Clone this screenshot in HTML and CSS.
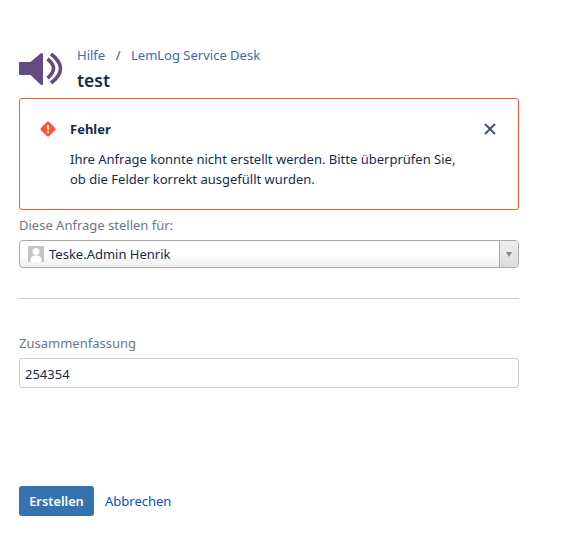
FILE: index.html
```html
<!DOCTYPE html>
<html lang="de">
<head>
<meta charset="utf-8">
<title>test</title>
<link rel="stylesheet" href="styles.css">
</head>
<body>
<main class="page">
  <header class="head">
    <svg class="logo" width="44" height="36" viewBox="0 0 44 36" aria-hidden="true">
      <path fill="#654982" d="M0 12Q0 11 1 11H11.500L21.500 2.500Q24 1 24 3.500V32.500Q24 35 21.500 33.500L11.500 24H1Q0 24 0 23Z"/>
      <path fill="none" stroke="#654982" stroke-width="3.600" d="M28.500 8Q40.500 17.500 28.500 27"/>
      <path fill="none" stroke="#654982" stroke-width="3.600" d="M32 3Q51 17.500 32 32"/>
    </svg>
    <div class="head-text">
      <nav class="crumbs"><a href="#">Hilfe</a><span class="sep">/</span><a href="#">LemLog Service Desk</a></nav>
      <h1 class="title">test</h1>
    </div>
  </header>

  <section class="alert">
    <svg class="alert-icon" width="16" height="16" viewBox="0 0 16 16" aria-hidden="true">
      <path fill="#ff5630" d="M6.800 1.100a1.700 1.700 0 0 1 2.400 0l5.700 5.700a1.700 1.700 0 0 1 0 2.400l-5.700 5.700a1.700 1.700 0 0 1-2.400 0L1.100 9.200a1.700 1.700 0 0 1 0-2.400z"/>
      <rect x="7" y="4" width="2" height="5" rx="1" fill="#fff"/>
      <circle cx="8" cy="11" r="1.100" fill="#fff"/>
    </svg>
    <div class="alert-body">
      <h2 class="alert-title">Fehler</h2>
      <p class="alert-text">Ihre Anfrage konnte nicht erstellt werden. Bitte überprüfen Sie,<br>ob die Felder korrekt ausgefüllt wurden.</p>
    </div>
    <svg class="alert-close" width="12" height="12" viewBox="0 0 12 12" aria-hidden="true">
      <path fill="none" stroke="#42526e" stroke-width="2" d="M1 1l10 10M11 1L1 11"/>
    </svg>
  </section>

  <div class="field">
    <label class="label">Diese Anfrage stellen für:</label>
    <div class="select">
      <svg class="avatar" width="16" height="16" viewBox="0 0 16 16" aria-hidden="true">
        <rect width="16" height="16" fill="#c4c4c4"/>
        <circle cx="8" cy="5.500" r="3.500" fill="#fff"/>
        <path fill="#fff" d="M2.500 16v-2.500Q2.500 10.500 6 9.500h4q3.500 1 3.500 4V16z"/>
      </svg>
      <span class="select-value">Teske.Admin Henrik</span>
      <span class="select-arrow"><span class="tri"></span></span>
    </div>
  </div>

  <hr class="rule">

  <div class="field summary">
    <label class="label">Zusammenfassung</label>
    <div class="input">254354</div>
  </div>

  <div class="actions">
    <button class="btn" type="button">Erstellen</button>
    <a class="cancel" href="#">Abbrechen</a>
  </div>
</main>
</body>
</html>
```
FILE: styles.css
```css
* { box-sizing: border-box; }
html, body { margin: 0; background: #fff; }
body {
  font-family: "Noto Sans", "Open Sans", sans-serif;
  font-size: 13px;
  color: #172b4d;
}
a { color: #3b6bab; text-decoration: none; }
.page { width: 500px; margin-left: 19px; padding-top: 44px; }
.head { display: flex; align-items: flex-start; height: 54px; }
.logo { margin-top: 7px; margin-right: 14px; flex: none; }
.head-text { display: flex; flex-direction: column; }
.crumbs { font-size: 13px; line-height: 22px; }
.sep { margin: 0 10.500px; color: #42526e; }
.title { margin: 2px 0 0; font-size: 17.500px; font-weight: 600; line-height: 24px; color: #172b4d; }
.alert {
  display: flex;
  height: 112px;
  border: 1px solid #ff5630;
  border-radius: 3px;
  padding: 21px 22px 0 20px;
}
.alert-icon { flex: none; margin-top: 1px; margin-right: 14px; }
.alert-body { flex: 1; }
.alert-title { margin: 0; font-size: 13px; font-weight: 700; line-height: 18px; }
.alert-text { margin: 11px 0 0; font-size: 13px; line-height: 20px; }
.alert-close { flex: none; margin-top: 3px; }
.field { display: flex; flex-direction: column; }
.label { font-size: 13px; line-height: 20px; color: #6b778c; margin: 5px 0 0; }
.select {
  display: flex;
  align-items: center;
  height: 28px;
  margin-top: 5px;
  border: 1px solid #aaa;
  border-radius: 4px;
  background: linear-gradient(#fff 50%, #eee);
}
.avatar { margin-left: 8px; margin-right: 5px; flex: none; }
.select-value { flex: 1; line-height: 26px; }
.select-arrow {
  display: flex;
  align-items: center;
  justify-content: center;
  width: 19px;
  height: 100%;
  border-left: 1px solid #aaa;
  background: linear-gradient(#eee, #ddd);
  border-radius: 0 3px 3px 0;
}
.tri { border: 3.500px solid transparent; border-top: 5px solid #888; border-bottom: 0; }
.rule { border: 0; border-top: 1px solid #ccc; margin: 30px 0 0; }
.summary { margin-top: 34px; }
.summary .label { margin: 0; }
.input {
  height: 30px;
  margin-top: 5px;
  border: 1px solid #ccc;
  border-radius: 3px;
  padding: 1px 5px 0;
  line-height: 28px;
}
.actions { display: flex; align-items: center; margin-top: 98px; }
.btn {
  width: 75px;
  height: 30px;
  border: 0;
  border-radius: 3px;
  background: #3572b0;
  color: #fff;
  font: 600 12.800px "Noto Sans", "Open Sans", sans-serif;
  padding: 0;
}
.cancel { margin-left: 11px; color: #0052cc; }
```
